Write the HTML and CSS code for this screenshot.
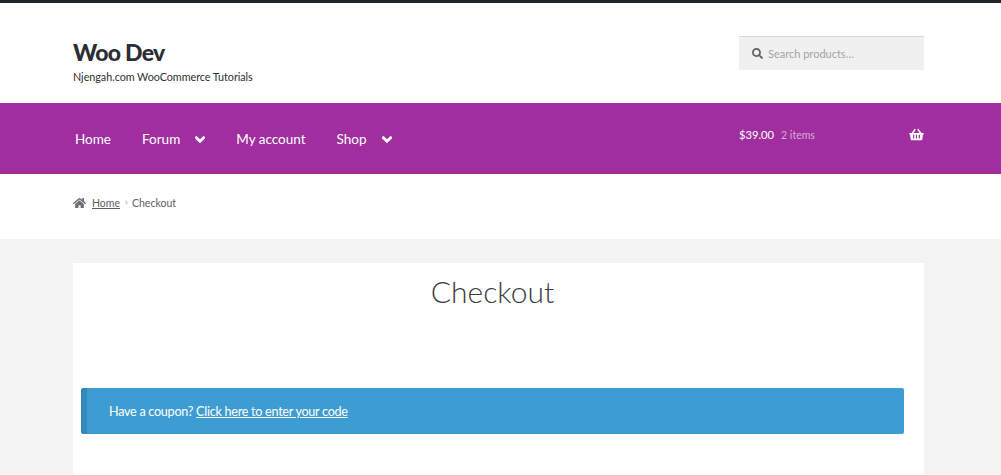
FILE: index.html
```html
<!DOCTYPE html>
<html lang="en">
<head>
<meta charset="utf-8">
<title>Checkout – Woo Dev</title>
<link rel="stylesheet" href="styles.css">
</head>
<body>
<header class="masthead">
  <div class="wrap brand-row">
    <div class="brand">
      <h1 class="site-title">Woo Dev</h1>
      <p class="tagline">Njengah.com WooCommerce Tutorials</p>
    </div>
    <form class="search">
      <svg class="search-icon" viewBox="0 0 512 512" aria-hidden="true"><path d="M505 442.700L405.300 343c-4.500-4.500-10.600-7-17-7H372c27.600-35.300 44-79.700 44-128C416 93.100 322.900 0 208 0S0 93.100 0 208s93.100 208 208 208c48.300 0 92.700-16.400 128-44v16.300c0 6.400 2.500 12.500 7 17l99.700 99.700c9.400 9.400 24.600 9.400 33.900 0l28.300-28.300c9.400-9.400 9.400-24.600.1-34zM208 336c-70.700 0-128-57.200-128-128 0-70.700 57.200-128 128-128 70.700 0 128 57.200 128 128 0 70.700-57.200 128-128 128z"/></svg>
      <span class="search-text">Search products…</span>
    </form>
  </div>
</header>
<nav class="navbar">
  <div class="wrap nav-row">
    <ul class="menu">
      <li><a href="#">Home</a></li>
      <li><a href="#">Forum</a><svg class="chev" viewBox="0 0 448 512" aria-hidden="true"><path d="M207 381.500L12.700 187.100c-9.400-9.400-9.400-24.600 0-33.900l22.700-22.700c9.400-9.400 24.500-9.400 33.900 0L224 284.500l154.700-154c9.400-9.300 24.500-9.300 33.900 0l22.700 22.700c9.400 9.400 9.400 24.600 0 33.900L241 381.500c-9.400 9.400-24.600 9.400-34 0z"/></svg></li>
      <li><a href="#">My account</a></li>
      <li><a href="#">Shop</a><svg class="chev" viewBox="0 0 448 512" aria-hidden="true"><path d="M207 381.500L12.700 187.100c-9.400-9.400-9.400-24.600 0-33.900l22.700-22.700c9.400-9.400 24.500-9.400 33.900 0L224 284.500l154.700-154c9.400-9.300 24.500-9.300 33.900 0l22.700 22.700c9.400 9.400 9.400 24.600 0 33.900L241 381.500c-9.400 9.400-24.600 9.400-34 0z"/></svg></li>
    </ul>
    <a class="cart" href="#">
      <span class="amount">$39.00</span>
      <span class="count">2 items</span>
      <svg class="basket" viewBox="0 0 576 512" aria-hidden="true"><path d="M576 216v16c0 13.300-10.700 24-24 24h-8l-26.100 182.800C514.500 462.400 494.200 480 470.300 480H105.700c-23.900 0-44.200-17.600-47.500-41.200L32 256h-8c-13.300 0-24-10.700-24-24v-16c0-13.300 10.700-24 24-24h67.300l106.800-146.800c10.400-14.300 30.400-17.500 44.700-7.100 14.300 10.400 17.500 30.400 7.100 44.700L170.500 192h235l-79.400-109.200c-10.400-14.300-7.200-34.300 7.100-44.700 14.300-10.400 34.300-7.200 44.700 7.100L484.700 192H552c13.300 0 24 10.700 24 24zM312 392V280c0-13.300-10.700-24-24-24s-24 10.700-24 24v112c0 13.300 10.700 24 24 24s24-10.700 24-24zm112 0V280c0-13.300-10.700-24-24-24s-24 10.700-24 24v112c0 13.300 10.700 24 24 24s24-10.700 24-24zm-224 0V280c0-13.300-10.700-24-24-24s-24 10.700-24 24v112c0 13.300 10.700 24 24 24s24-10.700 24-24z"/></svg>
    </a>
  </div>
</nav>
<div class="crumbs">
  <div class="wrap crumb-row">
    <svg class="home-icon" viewBox="0 0 576 512" aria-hidden="true"><path d="M280.400 148.300L96 300.100V464a16 16 0 0 0 16 16l112.100-.3a16 16 0 0 0 15.900-16V368a16 16 0 0 1 16-16h64a16 16 0 0 1 16 16v95.600a16 16 0 0 0 16 16.100L464 480a16 16 0 0 0 16-16V300L295.700 148.300a12.200 12.200 0 0 0-15.300 0zM571.600 251.500L488 182.600V44.100a12 12 0 0 0-12-12h-56a12 12 0 0 0-12 12v72.600L318.500 43a48 48 0 0 0-61 0L4.300 251.500a12 12 0 0 0-1.600 16.900l25.500 31A12 12 0 0 0 45.200 301l235.200-193.700a12.200 12.200 0 0 1 15.300 0L530.900 301a12 12 0 0 0 16.900-1.600l25.500-31a12 12 0 0 0-1.700-16.900z"/></svg>
    <a class="crumb-link" href="#">Home</a>
    <svg class="crumb-sep" viewBox="0 0 256 512" aria-hidden="true"><path d="M224.300 273l-136 136c-9.400 9.400-24.600 9.400-33.900 0l-22.600-22.600c-9.400-9.400-9.400-24.600 0-33.900l96.400-96.400-96.400-96.400c-9.400-9.400-9.400-24.600 0-33.900L54.300 103c9.400-9.400 24.600-9.400 33.900 0l136 136c9.500 9.400 9.500 24.600.1 34z"/></svg>
    <span>Checkout</span>
  </div>
</div>
<main class="content">
  <article class="card">
    <h2 class="page-title">Checkout</h2>
    <div class="notice">Have a coupon? <a href="#">Click here to enter your code</a></div>
  </article>
</main>
</body>
</html>
```
FILE: styles.css
```css
* { box-sizing: border-box; }
html, body { margin: 0; padding: 0; }
body {
  height: 475px;
  overflow: hidden;
  background: #f3f3f3;
  color: #43454b;
  font-family: Lato, "Noto Sans", sans-serif;
  font-size: 14px;
}
a { color: inherit; }
.wrap { width: 851px; margin-left: 73px; }

.masthead {
  height: 103px;
  background: #fff;
  border-top: 3px solid #212529;
}
.brand-row {
  display: flex;
  justify-content: space-between;
  align-items: flex-start;
}
.brand { padding-top: 35px; }
.site-title {
  margin: 0;
  font-size: 23px;
  line-height: 28px;
  font-weight: 900;
  letter-spacing: -0.7px;
  color: #2c2d33;
}
.tagline {
  margin: 3px 0 0;
  font-size: 10.800px;
  line-height: 16px;
  letter-spacing: -0.05px;
  color: #303030;
}
.search {
  display: flex;
  align-items: center;
  gap: 5px;
  width: 185px;
  height: 34px;
  margin-top: 33px;
  padding-left: 13px;
  background: #f0f0f0;
  border-top: 1px solid #d8d8d8;
}
.search-icon { width: 11px; height: 11px; fill: #5f6168; }
.search-text { font-size: 11px; color: #a4a4a6; }

.navbar { height: 71px; background: #a02e9f; color: #fff; }
.nav-row {
  display: flex;
  justify-content: space-between;
  height: 100%;
}
.menu {
  display: flex;
  align-items: center;
  gap: 31px;
  margin: 0;
  padding: 1px 0 0 2px;
  list-style: none;
  font-size: 13.500px;
}
.menu li { display: flex; align-items: center; height: 20px; }
.menu a { text-decoration: none; }
.chev { width: 10px; height: 11px; margin-left: 15px; fill: #fff; stroke: #fff; stroke-width: 50; }
.cart {
  display: flex;
  align-items: center;
  width: 185px;
  height: 63px;
  text-decoration: none;
}
.amount { font-size: 11.200px; margin-right: 7px; }
.count { font-size: 10.500px; color: #d9acd8; }
.basket { width: 15px; height: 13px; margin-left: auto; fill: #fff; }

.crumbs { height: 65px; background: #fff; }
.crumb-row {
  display: flex;
  align-items: center;
  height: 57px;
  font-size: 10.500px;
  color: #5c5e64;
}
.home-icon { width: 13px; height: 12px; margin-right: 6px; fill: #6d6f75; }
.crumb-sep { width: 5px; height: 7px; margin: 0 3px 0 4px; fill: #ccc; }

.content { padding-top: 24px; }
.card {
  width: 851px;
  height: 212px;
  margin-left: 73px;
  padding: 0 20px 0 8px;
  background: #fff;
}
.page-title {
  margin: 0;
  height: 125px;
  text-align: center;
  font-size: 30px;
  line-height: 57px;
  font-weight: 300;
  color: #3b3d42;
}
.notice {
  height: 46px;
  padding-left: 22px;
  display: flex;
  align-items: center;
  gap: 3px;
  background: #3d9cd2;
  border-left: 6px solid #3388ba;
  border-radius: 2px;
  color: #fff;
  font-size: 12.600px;
  letter-spacing: -0.27px;
}
```
